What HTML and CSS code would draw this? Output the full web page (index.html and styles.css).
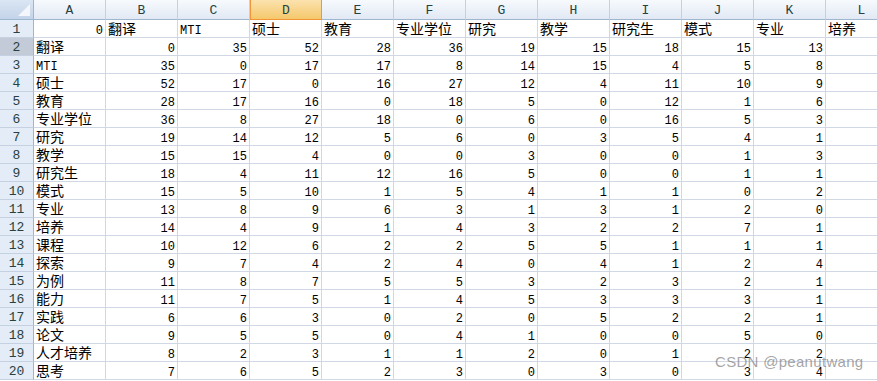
FILE: index.html
```html
<!DOCTYPE html>
<html lang="zh">
<head>
<meta charset="utf-8">
<title>Sheet1</title>
<link rel="stylesheet" href="styles.css">
</head>
<body>
<div class="sheet">
  <div class="corner"><span class="tri"></span></div>
  <div class="ch">A</div><div class="ch">B</div><div class="ch">C</div><div class="ch sel">D</div><div class="ch">E</div><div class="ch">F</div><div class="ch">G</div><div class="ch">H</div><div class="ch">I</div><div class="ch">J</div><div class="ch">K</div><div class="ch">L</div>

  <div class="rh">1</div><div class="c n">0</div><div class="c t">翻译</div><div class="c m">MTI</div><div class="c t">硕士</div><div class="c t">教育</div><div class="c t">专业学位</div><div class="c t">研究</div><div class="c t">教学</div><div class="c t">研究生</div><div class="c t">模式</div><div class="c t">专业</div><div class="c t">培养</div>

  <div class="rh rsel">2</div><div class="c t">翻译</div><div class="c n">0</div><div class="c n">35</div><div class="c n">52</div><div class="c n">28</div><div class="c n">36</div><div class="c n">19</div><div class="c n">15</div><div class="c n">18</div><div class="c n">15</div><div class="c n">13</div><div class="c"></div>

  <div class="rh">3</div><div class="c m">MTI</div><div class="c n">35</div><div class="c n">0</div><div class="c n">17</div><div class="c n">17</div><div class="c n">8</div><div class="c n">14</div><div class="c n">15</div><div class="c n">4</div><div class="c n">5</div><div class="c n">8</div><div class="c"></div>

  <div class="rh">4</div><div class="c t">硕士</div><div class="c n">52</div><div class="c n">17</div><div class="c n">0</div><div class="c n">16</div><div class="c n">27</div><div class="c n">12</div><div class="c n">4</div><div class="c n">11</div><div class="c n">10</div><div class="c n">9</div><div class="c"></div>

  <div class="rh">5</div><div class="c t">教育</div><div class="c n">28</div><div class="c n">17</div><div class="c n">16</div><div class="c n">0</div><div class="c n">18</div><div class="c n">5</div><div class="c n">0</div><div class="c n">12</div><div class="c n">1</div><div class="c n">6</div><div class="c"></div>

  <div class="rh">6</div><div class="c t">专业学位</div><div class="c n">36</div><div class="c n">8</div><div class="c n">27</div><div class="c n">18</div><div class="c n">0</div><div class="c n">6</div><div class="c n">0</div><div class="c n">16</div><div class="c n">5</div><div class="c n">3</div><div class="c"></div>

  <div class="rh">7</div><div class="c t">研究</div><div class="c n">19</div><div class="c n">14</div><div class="c n">12</div><div class="c n">5</div><div class="c n">6</div><div class="c n">0</div><div class="c n">3</div><div class="c n">5</div><div class="c n">4</div><div class="c n">1</div><div class="c"></div>

  <div class="rh">8</div><div class="c t">教学</div><div class="c n">15</div><div class="c n">15</div><div class="c n">4</div><div class="c n">0</div><div class="c n">0</div><div class="c n">3</div><div class="c n">0</div><div class="c n">0</div><div class="c n">1</div><div class="c n">3</div><div class="c"></div>

  <div class="rh">9</div><div class="c t">研究生</div><div class="c n">18</div><div class="c n">4</div><div class="c n">11</div><div class="c n">12</div><div class="c n">16</div><div class="c n">5</div><div class="c n">0</div><div class="c n">0</div><div class="c n">1</div><div class="c n">1</div><div class="c"></div>

  <div class="rh">10</div><div class="c t">模式</div><div class="c n">15</div><div class="c n">5</div><div class="c n">10</div><div class="c n">1</div><div class="c n">5</div><div class="c n">4</div><div class="c n">1</div><div class="c n">1</div><div class="c n">0</div><div class="c n">2</div><div class="c"></div>

  <div class="rh">11</div><div class="c t">专业</div><div class="c n">13</div><div class="c n">8</div><div class="c n">9</div><div class="c n">6</div><div class="c n">3</div><div class="c n">1</div><div class="c n">3</div><div class="c n">1</div><div class="c n">2</div><div class="c n">0</div><div class="c"></div>

  <div class="rh">12</div><div class="c t">培养</div><div class="c n">14</div><div class="c n">4</div><div class="c n">9</div><div class="c n">1</div><div class="c n">4</div><div class="c n">3</div><div class="c n">2</div><div class="c n">2</div><div class="c n">7</div><div class="c n">1</div><div class="c"></div>

  <div class="rh">13</div><div class="c t">课程</div><div class="c n">10</div><div class="c n">12</div><div class="c n">6</div><div class="c n">2</div><div class="c n">2</div><div class="c n">5</div><div class="c n">5</div><div class="c n">1</div><div class="c n">1</div><div class="c n">1</div><div class="c"></div>

  <div class="rh">14</div><div class="c t">探索</div><div class="c n">9</div><div class="c n">7</div><div class="c n">4</div><div class="c n">2</div><div class="c n">4</div><div class="c n">0</div><div class="c n">4</div><div class="c n">1</div><div class="c n">2</div><div class="c n">4</div><div class="c"></div>

  <div class="rh">15</div><div class="c t">为例</div><div class="c n">11</div><div class="c n">8</div><div class="c n">7</div><div class="c n">5</div><div class="c n">5</div><div class="c n">3</div><div class="c n">2</div><div class="c n">3</div><div class="c n">2</div><div class="c n">1</div><div class="c"></div>

  <div class="rh">16</div><div class="c t">能力</div><div class="c n">11</div><div class="c n">7</div><div class="c n">5</div><div class="c n">1</div><div class="c n">4</div><div class="c n">5</div><div class="c n">3</div><div class="c n">3</div><div class="c n">3</div><div class="c n">1</div><div class="c"></div>

  <div class="rh">17</div><div class="c t">实践</div><div class="c n">6</div><div class="c n">6</div><div class="c n">3</div><div class="c n">0</div><div class="c n">2</div><div class="c n">0</div><div class="c n">5</div><div class="c n">2</div><div class="c n">2</div><div class="c n">1</div><div class="c"></div>

  <div class="rh">18</div><div class="c t">论文</div><div class="c n">9</div><div class="c n">5</div><div class="c n">5</div><div class="c n">0</div><div class="c n">4</div><div class="c n">1</div><div class="c n">0</div><div class="c n">0</div><div class="c n">5</div><div class="c n">0</div><div class="c"></div>

  <div class="rh">19</div><div class="c t">人才培养</div><div class="c n">8</div><div class="c n">2</div><div class="c n">3</div><div class="c n">1</div><div class="c n">1</div><div class="c n">2</div><div class="c n">0</div><div class="c n">1</div><div class="c n">2</div><div class="c n">2</div><div class="c"></div>

  <div class="rh">20</div><div class="c t">思考</div><div class="c n">7</div><div class="c n">6</div><div class="c n">5</div><div class="c n">2</div><div class="c n">3</div><div class="c n">0</div><div class="c n">3</div><div class="c n">0</div><div class="c n">3</div><div class="c n">4</div><div class="c"></div>
</div>
<div class="watermark">CSDN @peanutwang</div>
</body>
</html>
```

FILE: styles.css
```css
html, body {
  margin: 0;
  padding: 0;
  background: #ffffff;
  overflow: hidden;
}

.sheet {
  display: grid;
  grid-template-columns: 34px repeat(12, 72px);
  grid-template-rows: 20px repeat(20, 18px);
  font-family: "Liberation Mono", "Noto Sans CJK SC", monospace;
  font-size: 12px;
  color: #000;
}

.sheet > div {
  box-sizing: border-box;
  overflow: hidden;
  white-space: nowrap;
}

.corner {
  position: relative;
  background: linear-gradient(#dbe6f4, #c3d3e8);
  border-right: 1px solid #9eb6ce;
  border-bottom: 1px solid #9eb6ce;
}

.tri {
  position: absolute;
  right: 3px;
  bottom: 3px;
  width: 0;
  height: 0;
  border-left: 12px solid transparent;
  border-bottom: 12px solid #f3f6fb;
}

.ch {
  background: linear-gradient(#f7fafd, #e2e9f4);
  border-right: 1px solid #c5d1e1;
  border-bottom: 1px solid #9eb6ce;
  text-align: center;
  line-height: 21px;
  font-size: 13px;
  color: #27413e;
}

.ch.sel {
  background: linear-gradient(#fbe2ae, #f5c86c);
  border-right: 1px solid #f29536;
  border-left: 1px solid #f29536;
  border-bottom: 1px solid #f29536;
  color: #27413e;
}

.rh {
  background: #e4ecf7;
  border-right: 1px solid #9eb6ce;
  border-bottom: 1px solid #c5d1e1;
  text-align: center;
  line-height: 19px;
  font-size: 13px;
  color: #27413e;
}

.rh.rsel {
  background: #c2cbd7;
}

.c {
  border-right: 1px solid #d0d7e5;
  border-bottom: 1px solid #d0d7e5;
  line-height: 14px;
  padding: 4px 2px 0 2px;
}

.n {
  text-align: right;
}

.sheet > .t {
  font-family: "Noto Sans CJK SC", sans-serif;
  font-size: 14px;
  padding-top: 0;
  line-height: 17px;
  overflow: visible;
}

.m {
  text-align: left;
}

.watermark {
  position: absolute;
  left: 715px;
  top: 354px;
  white-space: nowrap;
  font-family: "Liberation Sans", Arial, sans-serif;
  font-size: 15px;
  line-height: 15px;
  letter-spacing: 0.3px;
  color: rgba(125, 125, 125, 0.7);
}
```
